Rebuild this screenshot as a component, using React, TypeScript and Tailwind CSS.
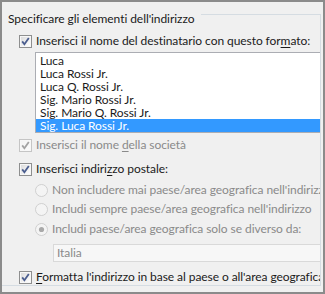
import { ReactNode } from "react";

const FONT = { fontFamily: 'Lato, "Noto Sans", sans-serif' };

function CheckBox({ disabled }: { disabled?: boolean }) {
  const border = disabled ? "#c5c5c5" : "#8e8f8f";
  const mark = disabled ? "#a3a3a3" : "#4b5e8f";
  return (
    <svg width="13" height="13" viewBox="0 0 13 13" className="shrink-0">
      <defs>
        <linearGradient id={disabled ? "cbd" : "cbn"} x1="0" y1="0" x2="1" y2="1">
          <stop offset="0" stopColor={disabled ? "#f4f4f4" : "#dcdcdc"} />
          <stop offset="1" stopColor={disabled ? "#fbfbfb" : "#ffffff"} />
        </linearGradient>
      </defs>
      <rect x="0.5" y="0.5" width="12" height="12" fill="#f7f7f7" stroke={border} />
      <rect x="2" y="2" width="9" height="9" fill={`url(#${disabled ? "cbd" : "cbn"})`} />
      <path d="M3.2 6.4 L5.4 9.2 L9.8 3" fill="none" stroke={mark} strokeWidth="1.8" />
    </svg>
  );
}

function Radio({ checked }: { checked?: boolean }) {
  return (
    <svg width="13" height="13" viewBox="0 0 13 13" className="shrink-0">
      <circle cx="6.5" cy="6.5" r="6" fill="#f4f4f4" stroke="#cfcfcf" />
      {checked && <circle cx="6.5" cy="6.5" r="2.6" fill="#a9a9a9" />}
    </svg>
  );
}

function Row({
  children,
  icon,
  className,
  disabled,
}: {
  children: ReactNode;
  icon: ReactNode;
  className: string;
  disabled?: boolean;
}) {
  return (
    <div
      className={`flex h-[16px] items-center gap-[4px] whitespace-nowrap ${
        disabled ? "text-[#8a8a8a]" : "text-[#1b1b1b]"
      } ${className}`}
    >
      {icon}
      <span className="leading-[16px]">{children}</span>
    </div>
  );
}

const formats = [
  "Luca",
  "Luca Rossi Jr.",
  "Luca Q. Rossi Jr.",
  "Sig. Mario Rossi Jr.",
  "Sig. Mario Q. Rossi Jr.",
  "Sig. Luca Rossi Jr.",
];

export default function App() {
  return (
    <div
      className="w-[325px] h-[294px] overflow-hidden border-2 border-[#8b8b8b] bg-[#f0f0f0] text-[12px] tracking-[-0.07px]"
      style={FONT}
    >
      <div className="mt-[12px] mr-[2px] h-[272px] overflow-hidden border-r border-b border-[#d5dce2]">
        <div className="flex items-start">
          <span className="-mt-[3px] ml-[6px] leading-[16px] whitespace-nowrap text-[#1b1b1b]">
            Specificare gli elementi dell'indirizzo
          </span>
          <div className="ml-[7px] flex-1 border-t border-[#d5dce2]" />
        </div>

        <Row icon={<CheckBox />} className="mt-[6px] pl-[17px]">
          Inserisci il nome del destinatario con questo for
          <span className="underline underline-offset-2">m</span>ato:
        </Row>

        <div className="mt-[3px] ml-[33px] w-[300px] border border-[#abadb3] bg-white pt-[1px]">
          {formats.map((f, i) => (
            <div
              key={f}
              className={`h-[13px] pl-[4px] leading-[13px] whitespace-nowrap ${
                i === formats.length - 1 ? "bg-[#3399ff] text-white" : "text-[#1b1b1b]"
              }`}
            >
              {f}
            </div>
          ))}
        </div>

        <Row icon={<CheckBox disabled />} disabled className="mt-[4px] pl-[17px]">
          Inserisci il nome <span className="underline underline-offset-2">d</span>ella società
        </Row>

        <Row icon={<CheckBox />} className="mt-[8px] pl-[17px]">
          Inserisci indiri<span className="underline underline-offset-2">z</span>zo postale:
        </Row>

        <Row icon={<Radio />} disabled className="mt-[5px] pl-[33px]">
          Non includere mai paese/area geografica nell'indirizzo
        </Row>
        <Row icon={<Radio />} disabled className="mt-[3px] pl-[33px]">
          Includi sempre paese/area geografica nell'indirizzo
        </Row>
        <Row icon={<Radio checked />} disabled className="mt-[4px] pl-[33px]">
          Includi paese/area geografica solo se diverso da:
        </Row>

        <div className="mt-[7px] ml-[51px] flex h-[18px] w-[300px] items-center border border-[#d9d9d9] bg-[#f7f7f7] pl-[3px] text-[#8a8a8a]">
          Italia
        </div>

        <Row icon={<CheckBox />} className="mt-[7px] pl-[17px]">
          <span className="underline underline-offset-2">F</span>ormatta l'indirizzo in base al paese o all'area geografica
        </Row>
      </div>
    </div>
  );
}
